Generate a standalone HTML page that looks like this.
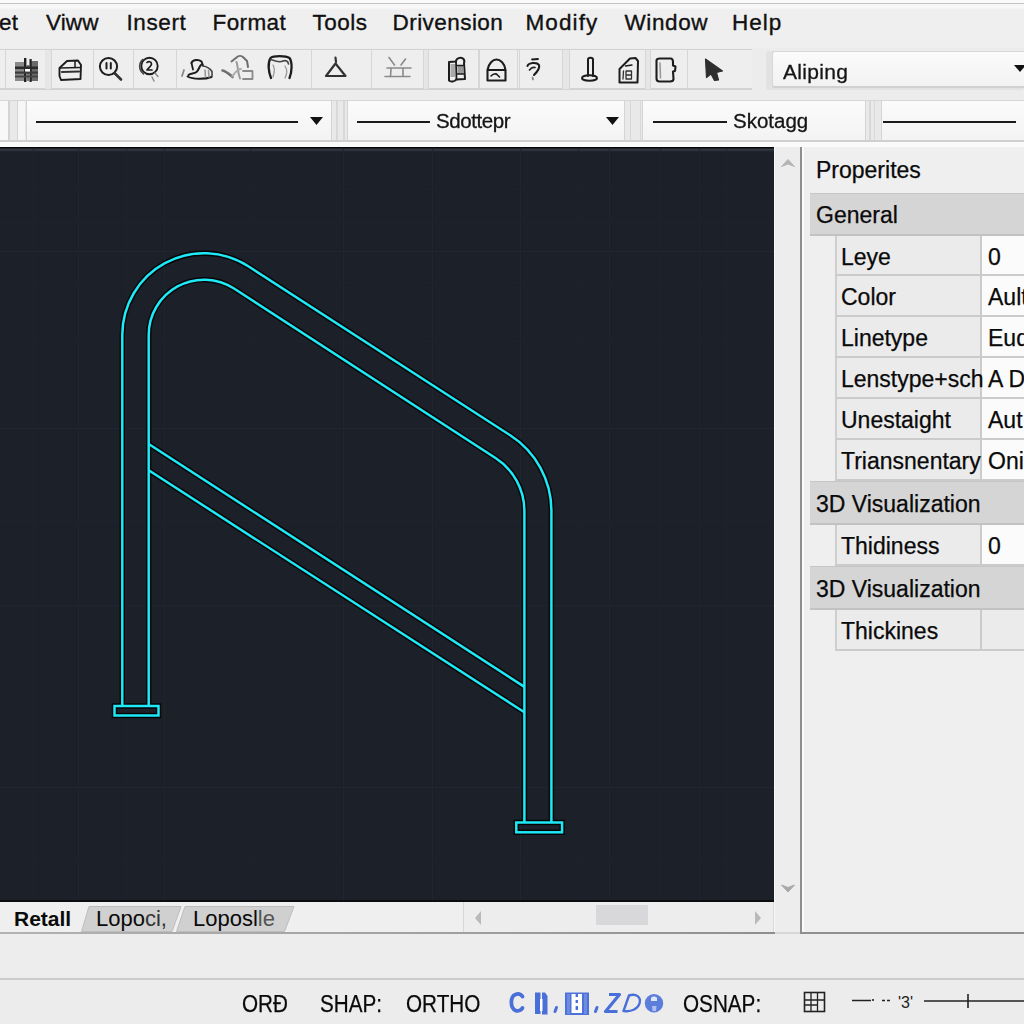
<!DOCTYPE html>
<html><head><meta charset="utf-8">
<style>
*{margin:0;padding:0;box-sizing:border-box}
html,body{width:1024px;height:1024px;overflow:hidden;background:#ececec;font-family:"Liberation Sans",sans-serif;color:#111}
.a{position:absolute}
.t{position:absolute;white-space:nowrap;line-height:1}
#menutxt .t{-webkit-text-stroke:0.35px #111;color:#111}
.pt{font-size:23px;color:#0a0a0a;margin-top:1.5px;-webkit-text-stroke:0.25px #0a0a0a}
.hdr{background:#d5d5d5;border-top:1px solid #c6c6c6;border-bottom:2px solid #c2c2c2}
.lab{background:#ebebeb;border-left:2px solid #cecece;border-bottom:2px solid #cbcbcb;border-right:2px solid #cbcbcb}
.val{background:#fbfbfb;border-bottom:2px solid #cbcbcb}
.lab2{background:#ebebeb;border-bottom:2px solid #cbcbcb}
.dd{background:linear-gradient(#fbfbfb,#f3f3f3);border-left:1.5px solid #d4d4d4;border-right:1.5px solid #d4d4d4}
.ln{height:2.2px;background:#1a1a1a}
.st{font-size:23.5px;color:#0a0a0a;-webkit-text-stroke:0.25px #0a0a0a;transform:scaleX(0.88);transform-origin:0 0}
.gl{color:#151515;-webkit-text-stroke:0.3px #151515;filter:blur(0.25px)}
</style></head><body>
<!-- top strip -->
<div class="a" style="left:0;top:0;width:1024px;height:3px;background:#fafafa"></div>
<div class="a" style="left:0;top:3px;width:1024px;height:1px;background:#c4c4c4"></div>
<div id="menu" class="a" style="left:0;top:4px;width:1024px;height:44px;background:linear-gradient(#f7f7f7 0px,#f7f7f7 4px,#efefef 6px)">
</div>
<div id="menutxt">
<span class="t" style="left:-1px;top:12px;font-size:22.5px;letter-spacing:0.3px">et</span>
<span class="t" style="left:46px;top:12px;font-size:22.5px;letter-spacing:0.1px">Viww</span>
<span class="t" style="left:126.5px;top:12px;font-size:22.5px;letter-spacing:0.6px">Insert</span>
<span class="t" style="left:212.5px;top:12px;font-size:22.5px;letter-spacing:0.4px">Format</span>
<span class="t" style="left:312.5px;top:12px;font-size:22.5px;letter-spacing:0.5px">Tools</span>
<span class="t" style="left:392.5px;top:12px;font-size:22.5px;letter-spacing:0.45px">Drivension</span>
<span class="t" style="left:525.5px;top:12px;font-size:22.5px;letter-spacing:1.1px">Modify</span>
<span class="t" style="left:624.5px;top:12px;font-size:22.5px;letter-spacing:0.6px">Window</span>
<span class="t" style="left:732px;top:12px;font-size:22.5px;letter-spacing:1.0px">Help</span>
</div>

<!-- toolbar row 1 -->
<div class="a" style="left:0;top:48px;width:1024px;height:46px;background:#ececec"></div>
<div class="a" style="left:0;top:49px;width:752px;height:41px;background:#eeeeee;border-top:1.5px solid #d3d3d3;border-bottom:2px solid #d3d3d3"></div>
<div class="a" style="left:4.5px;top:50px;width:1.5px;height:39px;background:#d6d6d6"></div>
<div class="a" style="left:44.5px;top:50px;width:1.5px;height:39px;background:#d6d6d6"></div>
<div class="a" style="left:50.5px;top:50px;width:1.5px;height:39px;background:#d6d6d6"></div>
<div class="a" style="left:92.5px;top:50px;width:1.5px;height:39px;background:#d6d6d6"></div>
<div class="a" style="left:132.5px;top:50px;width:1.5px;height:39px;background:#d6d6d6"></div>
<div class="a" style="left:175.5px;top:50px;width:1.5px;height:39px;background:#d6d6d6"></div>
<div class="a" style="left:310.5px;top:50px;width:1.5px;height:39px;background:#d6d6d6"></div>
<div class="a" style="left:370.5px;top:50px;width:1.5px;height:39px;background:#d6d6d6"></div>
<div class="a" style="left:423px;top:50px;width:1.5px;height:39px;background:#d6d6d6"></div>
<div class="a" style="left:427.5px;top:50px;width:1.5px;height:39px;background:#d6d6d6"></div>
<div class="a" style="left:478px;top:50px;width:1.5px;height:39px;background:#d6d6d6"></div>
<div class="a" style="left:516.5px;top:50px;width:1.5px;height:39px;background:#d6d6d6"></div>
<div class="a" style="left:518.5px;top:50px;width:1.5px;height:39px;background:#d6d6d6"></div>
<div class="a" style="left:562px;top:50px;width:1.5px;height:39px;background:#d6d6d6"></div>
<div class="a" style="left:568.5px;top:50px;width:1.5px;height:39px;background:#d6d6d6"></div>
<div class="a" style="left:645px;top:50px;width:1.5px;height:39px;background:#d6d6d6"></div>
<div class="a" style="left:649.5px;top:50px;width:1.5px;height:39px;background:#d6d6d6"></div>
<div class="a" style="left:686.5px;top:50px;width:1.5px;height:39px;background:#d6d6d6"></div>
<div class="a" style="left:45px;top:50px;width:6px;height:39px;background:#e6e6e6"></div>
<div class="a" style="left:423.5px;top:50px;width:4px;height:39px;background:#e6e6e6"></div>
<div class="a" style="left:562.5px;top:50px;width:6px;height:39px;background:#e6e6e6"></div>
<div class="a" style="left:645.5px;top:50px;width:4px;height:39px;background:#e6e6e6"></div>
<!-- tb icons -->
<svg class="a" style="left:0;top:0" width="1024" height="100" viewBox="0 0 1024 100">
<defs><filter id="bl" x="-20%" y="-20%" width="140%" height="140%"><feGaussianBlur stdDeviation="0.45"/></filter></defs>
<g filter="url(#bl)" fill="none" stroke="#1e1e1e" stroke-width="1.9" stroke-linecap="round" stroke-linejoin="round">
<!-- film grid -->
<g stroke="none">
<rect x="15" y="62" width="9" height="19" fill="#8a8a8a"/>
<rect x="31" y="61" width="7" height="20" fill="#6a6a6a"/>
<rect x="24" y="58" width="2.4" height="24" fill="#222"/>
<rect x="29.5" y="59" width="2.2" height="23" fill="#222"/>
<rect x="26.5" y="65" width="3" height="16" fill="#777"/>
<rect x="15" y="66.5" width="23" height="2.6" fill="#2a2a2a"/>
<rect x="15" y="71.5" width="23" height="2.2" fill="#3a3a3a"/>
<rect x="15" y="75.5" width="23" height="2" fill="#444"/>
<rect x="25" y="69" width="5" height="2.5" fill="#fff"/>
</g>
<!-- box icon -->
<path d="M59.5,68 L67,61 L78,60.5 L81,65 L80.5,79 L61,80 L59.5,76 Z"/>
<path d="M60,68 L80.5,67.5" stroke-width="1.5"/>
<path d="M75,61 L75,67" stroke-width="1.5"/>
<path d="M62,72 L79,71.5" stroke-width="2.2" stroke="#333"/>
<!-- magnifier 1 -->
<circle cx="108.5" cy="66.5" r="8.6" stroke-width="2"/>
<path d="M115,73.5 L121,79.5" stroke-width="2.6" stroke="#333"/>
<path d="M106.5,63 L106.5,68.5 M110.8,63 L110.8,68.5" stroke-width="2"/>
<!-- magnifier 2 -->
<circle cx="149.5" cy="66" r="8.2" stroke-width="1.9"/>
<path d="M143,59.5 C138.5,63 138.5,70 143.5,74" stroke-width="1.6" stroke="#444"/>
<path d="M147,62.5 C148.5,61 151.5,61.5 151.5,64 C151.5,66 148,68.5 147,70 L152,70" stroke-width="1.7"/>
<path d="M155,73 L158,76.5 M152,77 L154,81" stroke-width="1.4" stroke="#888"/>
<!-- blob 1 -->
<path d="M191.5,63 C192.5,59.5 198.5,59 201.5,61.5 L203,65.5" stroke-width="2"/>
<path d="M191.5,63 L193,69.5" stroke-width="1.8"/>
<path d="M201.5,64.5 C199,66.5 199,70 196.5,72 C194,74 190.5,73 188.5,75" stroke-width="2"/>
<path d="M187.5,76.5 C193,79.5 205,79.5 211.5,77" stroke-width="1.9"/>
<path d="M203,66 C206.5,66.5 210,68.5 212,71.5 L212,76.5" stroke-width="1.6" stroke="#444"/>
<path d="M182,76 L184,70" stroke="#888" stroke-width="1.8"/>
<path d="M205,70 L205.5,77 M208.5,70.5 L209,77" stroke="#999" stroke-width="1.6"/>
<!-- blob 2 -->
<g stroke="#6e6e6e">
<path d="M222.5,70.5 C226,71 229,74 232.5,77" stroke-width="2.6"/>
<path d="M231.5,61.5 L236.5,57.5 C238.5,55.5 241.5,55.5 243.5,57.5 L247,61 L248,67" stroke-width="2"/>
<path d="M236.5,62 C238,66 237.5,72 240,78.5" stroke-width="2" stroke="#9a9a9a"/>
<path d="M243,71 L252.5,71 L252.5,79 L243,79" stroke-width="1.8" stroke="#8a8a8a"/>
<path d="M232,76.5 C236,72 237,69 241,69" stroke-width="1.8" stroke="#aaa"/>
</g>
<!-- arch -->
<path d="M271,78 C268.5,72 267.5,63 270.5,58 C273,55.5 286,55.5 289.5,58 C292.5,62 292,72 289.5,78" stroke-width="2.3"/>
<path d="M271,59.5 C275,61 279,63 283,61 C286,60 288,61 288.5,64" stroke-width="1.6" stroke="#444"/>
<path d="M273,65 C275,68 274,74 273,77 M285,66 C287,69 287,74 285,78" stroke-width="1.3" stroke="#999"/>
<!-- triangle -->
<path d="M335.5,63.5 L326,76 L345.5,76 Z" stroke-width="2.2" stroke="#333"/>
<path d="M335.5,57.5 L336,62" stroke-width="2.2" stroke="#333"/>
<!-- x triangle -->
<g stroke="#8a8a8a" stroke-width="1.6">
<path d="M389,57.5 L394.5,65 M405.5,59 L401,65"/>
<path d="M387,68 L411,68 M385,76.5 L410,76.5"/>
<path d="M391,68.5 L390.5,76.5 M403,68.5 L403,76.5"/>
</g>
<!-- film 2 -->
<path d="M449,80.5 L449,62 L456,61.5 C456,58 460.5,57 463,58.5 C464.5,60 464.5,62 464,63 L465,79 L456,79.5 C455,82 450,82 449,80.5 Z" stroke-width="2"/>
<path d="M456,61.5 L456.5,79.5" stroke-width="1.8"/>
<rect x="457.5" y="65" width="6" height="9" fill="#999" stroke="none"/>
<rect x="450.5" y="64" width="4.5" height="13" fill="#aaa" stroke="none"/>
<path d="M456.5,65.5 L464,65.5 M456.5,74 L464,74" stroke-width="1.4"/>
<!-- dome -->
<path d="M487.5,80.5 L487.5,70 C488.5,63.5 493,59.5 496.5,59.5 C500,59.5 505,63.5 505.5,70 L505.5,80.5 Z" stroke-width="2.1"/>
<path d="M488,70 L505,70" stroke-width="1.8"/>
<path d="M491,76 C493,74 496,73 497.5,75 L499.5,77" stroke-width="1.6"/>
<!-- ? -->
<path d="M532,59.5 L538,59" stroke-width="1.8"/>
<path d="M527.5,66 C528.5,62.5 537,62 539,65 C540,68 537,72 534,75" stroke-width="2.1"/>
<path d="M529.5,70 C531,68 533,67 535,67.5" stroke-width="1.6"/>
<path d="M532.5,77.5 L533,79.5" stroke="#888" stroke-width="1.8"/>
<!-- pin -->
<path d="M588,76 L588,59.5 C588,57 593,57 593,59.5 L593,76" stroke-width="2"/>
<ellipse cx="589.5" cy="78" rx="7.5" ry="2.8" stroke-width="2"/>
<!-- card -->
<path d="M619.5,82.5 L619.5,69 L630,58.5 L635.5,58 L638,61 L637.5,82.5 Z" stroke-width="2"/>
<path d="M625.5,66 L632,65" stroke-width="1.4"/>
<path d="M623.5,71 L623,79 M626,71 L631.5,71 L631.5,79 L626,79 Z M626,75 L631.5,75" stroke-width="1.3" stroke="#333"/>
<!-- doc -->
<path d="M656.5,60.5 C656.5,58.5 658,58.5 660,58.5 L670.5,58.5 C672.5,58.5 673,60 673,62 L673,65.5 L675.5,66.5 L675,71 L673,71.5 L673.5,79 C673.5,81 672,81.5 670,81.5 L659.5,81.5 C657.5,81.5 656.5,80.5 656.5,78.5 Z" stroke-width="2.1"/>
<path d="M660,63 L660.5,78" stroke="#999" stroke-width="1.6"/>
<!-- cursor -->
<path d="M705.5,59 L722.5,71 L716.5,72.5 L718.5,80 L714.5,80.5 L711,74 L706.5,77.5 Z" fill="#2e2e2e" stroke="#2e2e2e" stroke-width="1.2"/>
</g>
</svg>
<!-- dropdown aliping -->
<div class="a" style="left:766px;top:51px;width:258px;height:39px;background:#e2e2e2;border-radius:3px"></div>
<div class="a" style="left:772px;top:50.5px;width:252px;height:37.5px;background:linear-gradient(#fbfbfb,#f2f2f2);border:1.5px solid #d8d8d8;border-bottom:2px solid #d0d0d0;border-right:none;border-radius:3px 0 0 3px"></div>
<span class="t gl" style="left:783px;top:61px;font-size:21px;letter-spacing:0.3px">Aliping</span>
<svg class="a" style="left:1013px;top:64px" width="14" height="10"><path d="M1,1 L13,1 L7,8 Z" fill="#111"/></svg>

<!-- toolbar row 2 -->
<div class="a" style="left:0;top:94px;width:1024px;height:48px;background:#ececec"></div>
<div class="a" style="left:0;top:100px;width:1024px;height:41px;background:#e9e9e9;border-top:1.5px solid #d6d6d6"></div>
<div class="a" style="left:0;top:101px;width:8px;height:39px;background:#f8f8f8"></div>
<div class="a" style="left:8px;top:101px;width:1.5px;height:39px;background:#d4d4d4"></div>
<div class="a" style="left:16.5px;top:101px;width:1.5px;height:39px;background:#d4d4d4"></div>
<div class="a" style="left:18px;top:101px;width:7px;height:39px;background:#f6f6f6"></div>
<div class="a dd" style="left:25.5px;top:101px;width:306.5px;height:39px"></div>
<div class="a dd" style="left:346.5px;top:101px;width:278.0px;height:39px"></div>
<div class="a dd" style="left:641.5px;top:101px;width:224.5px;height:39px"></div>
<div class="a dd" style="left:880.5px;top:101px;width:149.5px;height:39px"></div>
<div class="a" style="left:336px;top:101px;width:1.5px;height:39px;background:#d8d8d8"></div>
<div class="a" style="left:343px;top:101px;width:1.5px;height:39px;background:#d8d8d8"></div>
<div class="a" style="left:629.5px;top:101px;width:1.5px;height:39px;background:#d8d8d8"></div>
<div class="a" style="left:639.5px;top:101px;width:1.5px;height:39px;background:#d8d8d8"></div>
<div class="a" style="left:869px;top:101px;width:1.5px;height:39px;background:#d8d8d8"></div>
<div class="a" style="left:873.5px;top:101px;width:1.5px;height:39px;background:#d8d8d8"></div>
<div class="a" style="left:0;top:139.5px;width:1024px;height:2.5px;background:#cfcfcf"></div>
<div class="a" style="left:0;top:142px;width:1024px;height:5px;background:#fafafa"></div>
<div class="a ln" style="left:36px;top:121px;width:262px"></div>
<div class="a ln" style="left:357px;top:121px;width:73px"></div>
<div class="a ln" style="left:653px;top:121px;width:74px"></div>
<div class="a ln" style="left:883px;top:121px;width:133px"></div>
<svg class="a" style="left:309px;top:116px" width="15" height="10"><path d="M1,1 L14,1 L7.5,9 Z" fill="#111"/></svg>
<svg class="a" style="left:605px;top:116px" width="15" height="10"><path d="M1,1 L14,1 L7.5,9 Z" fill="#111"/></svg>
<span class="t gl" style="left:436px;top:111px;font-size:20.5px;letter-spacing:-0.4px">Sdottepr</span>
<span class="t gl" style="left:733px;top:111px;font-size:20.5px;letter-spacing:0px">Skotagg</span>

<!-- canvas -->
<div class="a" style="left:0;top:147px;width:774px;height:755px;background:#1b2029;border-top:1.5px solid #060709;border-bottom:2px solid #0a0c10"></div>
<div class="a" style="left:0;top:148.5px;width:774px;height:3px;background:linear-gradient(#3a3d44,#1b2029)"></div>

<!-- drawing -->
<svg class="a" style="left:0;top:0" width="1024" height="1024" viewBox="0 0 1024 1024">
<defs><clipPath id="cv"><rect x="0" y="149" width="774" height="751"/></clipPath>
</defs>
<g clip-path="url(#cv)">
<g stroke="#21252f" stroke-width="1.2"><line x1="78.5" y1="149" x2="78.5" y2="900"/><line x1="164.5" y1="149" x2="164.5" y2="900"/><line x1="343.5" y1="149" x2="343.5" y2="900"/><line x1="432.5" y1="149" x2="432.5" y2="900"/><line x1="520.5" y1="149" x2="520.5" y2="900"/><line x1="609.5" y1="149" x2="609.5" y2="900"/><line x1="699.5" y1="149" x2="699.5" y2="900"/><line x1="0" y1="251.5" x2="774" y2="251.5"/><line x1="0" y1="428.5" x2="774" y2="428.5"/><line x1="0" y1="605.5" x2="774" y2="605.5"/><line x1="0" y1="787.5" x2="774" y2="787.5"/></g><g stroke="#1e222c" stroke-width="1"><line x1="33.5" y1="149" x2="33.5" y2="900"/><line x1="126.5" y1="149" x2="126.5" y2="900"/><line x1="250.5" y1="149" x2="250.5" y2="900"/><line x1="578.5" y1="149" x2="578.5" y2="900"/><line x1="660.5" y1="149" x2="660.5" y2="900"/><line x1="726.5" y1="149" x2="726.5" y2="900"/><line x1="0" y1="189.5" x2="774" y2="189.5"/><line x1="0" y1="223.5" x2="774" y2="223.5"/><line x1="0" y1="282.5" x2="774" y2="282.5"/><line x1="0" y1="341.5" x2="774" y2="341.5"/><line x1="0" y1="520.5" x2="774" y2="520.5"/><line x1="0" y1="860.5" x2="774" y2="860.5"/></g>
<g fill="none" stroke="#050507" stroke-width="5.4">
<path d="M122.3,705 L122.3,335 A81.7,81.7 0 0 1 248.3,266.3 L510.2,435.3 A90,90 0 0 1 551.4,511 L551.4,822"/>
<path d="M148.7,705 L148.7,335 A55.3,55.3 0 0 1 234,288.5 L495.5,458 A63,63 0 0 1 524.4,511 L524.4,822"/>
<path d="M148.7,444 L524.4,686.9"/>
<path d="M148.7,470.3 L524.4,712.3"/>
<rect x="114.5" y="706" width="44" height="9.5"/>
<rect x="516.3" y="822.5" width="45.8" height="9.8"/>
</g>
<g fill="none" stroke="#1ee9f6" stroke-width="2.5">
<path d="M122.3,705 L122.3,335 A81.7,81.7 0 0 1 248.3,266.3 L510.2,435.3 A90,90 0 0 1 551.4,511 L551.4,822"/>
<path d="M148.7,705 L148.7,335 A55.3,55.3 0 0 1 234,288.5 L495.5,458 A63,63 0 0 1 524.4,511 L524.4,822"/>
<path d="M148.7,444 L524.4,686.9"/>
<path d="M148.7,470.3 L524.4,712.3"/>
<rect x="114.5" y="706" width="44" height="9.5"/>
<rect x="516.3" y="822.5" width="45.8" height="9.8"/>
</g>
</g>
</svg>
<!-- vertical scrollbar -->
<div class="a" style="left:774px;top:147px;width:27px;height:786px;background:#ededed;border-left:1.5px solid #f7f7f7"></div>
<div class="a" style="left:800px;top:147px;width:2px;height:787px;background:#8e8e8e"></div>
<svg class="a" style="left:778px;top:156px" width="20" height="16"><path d="M3.5,10.5 L10,3.5 L16.5,10.5 L10,8 Z" fill="#b4b4b4" stroke="#b4b4b4" stroke-width="1" stroke-linejoin="round"/></svg>
<svg class="a" style="left:778px;top:880px" width="20" height="16"><path d="M3.5,5 L10,12 L16.5,5 L10,7.5 Z" fill="#a9a9a9" stroke="#a9a9a9" stroke-width="1" stroke-linejoin="round"/></svg>
<!-- properties panel -->
<div class="a" style="left:802px;top:147px;width:222px;height:786px;background:#efefef;border-left:2px solid #fafafa"></div>
<span class="t pt" style="left:816px;top:157px">Properites</span>
<div class="a hdr" style="left:810px;top:193px;width:214px;height:43px"></div>
<span class="t pt" style="left:816px;top:202px">General</span>
<div class="a lab" style="left:835px;top:236px;width:147px;height:40px"></div>
<div class="a val" style="left:982px;top:236px;width:42px;height:40px"></div>
<span class="t pt" style="left:841px;top:244px">Leye</span>
<span class="t pt" style="left:988px;top:244px">0</span>
<div class="a lab" style="left:835px;top:276px;width:147px;height:41px"></div>
<div class="a val" style="left:982px;top:276px;width:42px;height:41px"></div>
<span class="t pt" style="left:841px;top:284px">Color</span>
<span class="t pt" style="left:988px;top:284px">Ault</span>
<div class="a lab" style="left:835px;top:317px;width:147px;height:41px"></div>
<div class="a val" style="left:982px;top:317px;width:42px;height:41px"></div>
<span class="t pt" style="left:841px;top:325px">Linetype</span>
<span class="t pt" style="left:988px;top:325px">Eud</span>
<div class="a lab" style="left:835px;top:358px;width:147px;height:41px"></div>
<div class="a val" style="left:982px;top:358px;width:42px;height:41px"></div>
<span class="t pt" style="left:841px;top:366px">Lenstype+sch</span>
<span class="t pt" style="left:988px;top:366px">A D</span>
<div class="a lab" style="left:835px;top:399px;width:147px;height:41px"></div>
<div class="a val" style="left:982px;top:399px;width:42px;height:41px"></div>
<span class="t pt" style="left:841px;top:407px">Unestaight</span>
<span class="t pt" style="left:988px;top:407px">Aut</span>
<div class="a lab" style="left:835px;top:440px;width:147px;height:41px"></div>
<div class="a val" style="left:982px;top:440px;width:42px;height:41px"></div>
<span class="t pt" style="left:841px;top:448px">Triansnentary</span>
<span class="t pt" style="left:988px;top:448px">Oni</span>
<div class="a hdr" style="left:810px;top:481px;width:214px;height:44px"></div>
<span class="t pt" style="left:816px;top:491px">3D Visualization</span>
<div class="a lab" style="left:835px;top:525px;width:147px;height:41px"></div>
<div class="a val" style="left:982px;top:525px;width:42px;height:41px"></div>
<span class="t pt" style="left:841px;top:533px">Thidiness</span>
<span class="t pt" style="left:988px;top:533px">0</span>
<div class="a hdr" style="left:810px;top:566px;width:214px;height:44px"></div>
<span class="t pt" style="left:816px;top:576px">3D Visualization</span>
<div class="a lab" style="left:835px;top:610px;width:147px;height:41px"></div>
<div class="a lab2" style="left:982px;top:610px;width:42px;height:41px"></div>
<span class="t pt" style="left:841px;top:618px">Thickines</span>

<!-- tab bar -->
<div class="a" style="left:0;top:902px;width:774px;height:31px;background:#efefef"></div>
<div class="a" style="left:463px;top:902px;width:311px;height:31px;background:#ededed;border-left:1.5px solid #d8d8d8;border-right:1.5px solid #d8d8d8"></div>
<div class="a" style="left:596px;top:905px;width:52px;height:20px;background:#d8d8db"></div>
<svg class="a" style="left:470px;top:908px" width="16" height="20"><path d="M11,3 L5,10 L11,17 Z" fill="#b9b9b9"/></svg>
<svg class="a" style="left:750px;top:908px" width="16" height="20"><path d="M5,3 L11,10 L5,17 Z" fill="#b9b9b9"/></svg>
<span class="t" style="left:14px;top:908px;font-size:21px;font-weight:bold;color:#0a0a0a">Retall</span>
<svg class="a" style="left:0;top:895px" width="320" height="45">
<path d="M89,11.5 L181,11.5 L172,36.5 L81.5,36.5 Z" fill="#d0d0d0" stroke="#bdbdbd" stroke-width="1"/>
<path d="M185,11.5 L294,11.5 L284.5,36.5 L176.5,36.5 Z" fill="#d0d0d0" stroke="#bdbdbd" stroke-width="1"/>
</svg>
<span class="t" style="left:96px;top:908px;font-size:22px;color:#0a0a0a">Lopo<span style="color:#333">ci,</span></span>
<span class="t" style="left:193px;top:908px;font-size:22px;color:#0a0a0a">Loposl<span style="color:#555">le</span></span>
<div class="a" style="left:0;top:932px;width:1024px;height:1.8px;background:linear-gradient(90deg,#b2b2b2 0px,#a2a2a2 400px,#8f8f8f 774px,#8f8f8f 1024px)"></div>
<div class="a" style="left:775px;top:932px;width:25px;height:1.8px;background:#d6d6d6"></div>
<div class="a" style="left:0;top:933.8px;width:1024px;height:1.5px;background:#fbfbfb"></div>

<!-- command -->
<div class="a" style="left:0;top:934px;width:1024px;height:44px;background:#ededed"></div>
<div class="a" style="left:0;top:978px;width:1024px;height:1.5px;background:#cbcbcb"></div>
<!-- status -->
<div class="a" style="left:0;top:979.5px;width:1024px;height:45px;background:#ececec"></div>
<span class="t st" style="left:242px;top:993px">ORÐ</span>
<span class="t st" style="left:320px;top:993px">SHAP:</span>
<span class="t st" style="left:406px;top:993px">ORTHO</span>
<span class="t st" style="left:683px;top:993px">OSNAP:</span>
<svg class="a" style="left:500px;top:985px" width="180" height="36">
<defs><filter id="bl2" x="-20%" y="-20%" width="140%" height="140%"><feGaussianBlur stdDeviation="0.35"/></filter></defs>
<g fill="none" stroke="#4a6fd8" filter="url(#bl2)">
<path d="M22.5,11.5 C21,9 18,8.5 15.5,9.5 C10,11.5 10,23 15.5,25.5 C18,26.5 21,25.5 22.5,23" stroke-width="3.8" stroke-linecap="round"/>
<path d="M35,7.5 L40.5,7.5 L40.5,29 L35,29 Z" fill="#4a6fd8" stroke="none"/>
<path d="M42,7.5 L45,7.5 L47.5,11 L47.5,29.5 L42,29.5 Z" fill="#4a6fd8" stroke="none"/>
<path d="M40,14 L42.5,14 L42.5,26 L40,26 Z" fill="#fff" stroke="none"/>
<path d="M55,26.5 L56.5,22.5" stroke-width="3" stroke-linecap="round"/>
<rect x="65" y="7.5" width="24" height="22.5" fill="#4e72d9" stroke="none"/>
<rect x="67" y="9" width="3" height="20" fill="#6d8ce0" stroke="none"/>
<rect x="84" y="9" width="3" height="20" fill="#6d8ce0" stroke="none"/>
<rect x="71.5" y="9" width="10.5" height="19" fill="#fff" stroke="none"/>
<path d="M76.8,9 L76.8,12 M76.8,15 L76.8,18 M76.8,21 L76.8,25" stroke-width="2.4"/>
<path d="M95.5,26.5 L97,22.5" stroke-width="3" stroke-linecap="round"/>
<path d="M109,9.5 L119.5,9.5 L105.5,26.5 L117.5,26.5" stroke-width="3.2" stroke-linejoin="round"/>
<path d="M123.5,26 L129,10.5 C136,8 141.5,12 139.5,18.5 C138,23.5 132,27 124,26 Z" stroke-width="2.4" stroke-linejoin="round"/>
<circle cx="154" cy="18.3" r="9.2" fill="#5b7ddc" stroke="none"/>
<path d="M151,13 C152,11 156,11 157,13 L157,16 L151,16 Z" fill="#dfe6fa" stroke="none"/>
<path d="M152,21 L156.5,21 L156,26 L152.5,26 Z" fill="#aebff0" stroke="none"/>
</g>
</svg>
<svg class="a" style="left:800px;top:988px" width="224" height="30">
<g fill="none" stroke="#222">
<rect x="4.5" y="4.5" width="20" height="19" stroke-width="1.6"/>
<path d="M11,5 L11,23 M17.5,5 L17.5,23 M5,12 L24,12 M5,17 L17.5,17" stroke-width="1.3"/>
<path d="M52,12.5 L71,12.5 M73,11 L73,13" stroke-width="1.6"/>
<path d="M82,12.5 L85,12.5 M87,12.5 L90,12.5" stroke-width="1.4"/>
<path d="M124,13 L224,13 M168,6 L168,20" stroke-width="1.6"/>
</g>
<text x="98" y="20" font-family="Liberation Sans" font-size="16" fill="#222">'3'</text>
</svg>
</body></html>
